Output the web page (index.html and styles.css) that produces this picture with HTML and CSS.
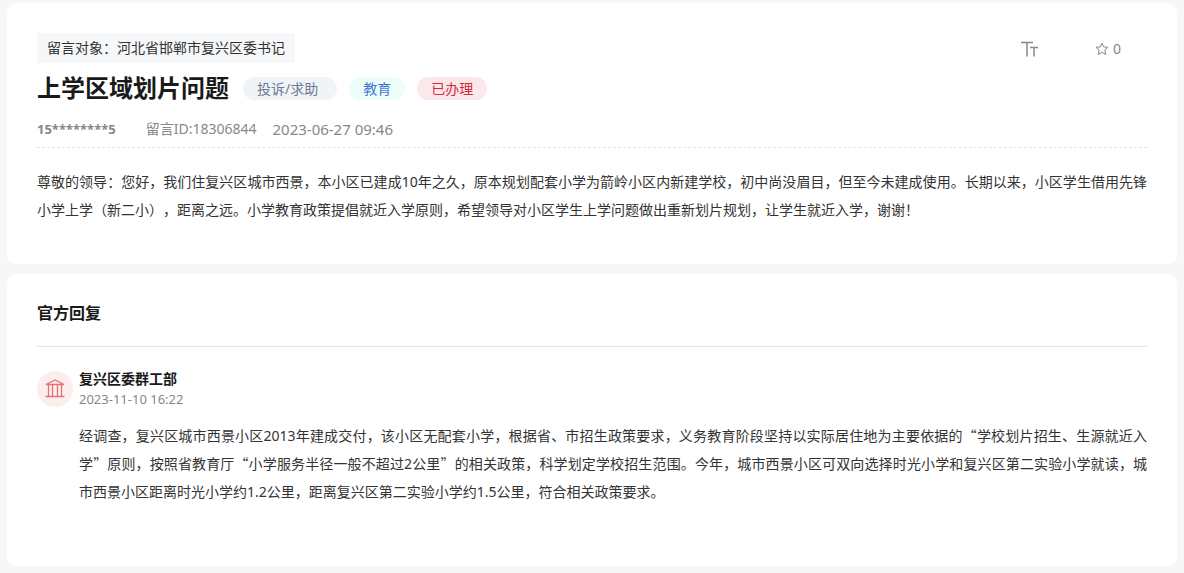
FILE: index.html
```html
<!DOCTYPE html>
<html lang="zh-CN">
<head>
<meta charset="utf-8">
<meta name="viewport" content="width=device-width, initial-scale=1">
<title>上学区域划片问题</title>
<link rel="stylesheet" href="styles.css">
</head>
<body>
<main class="page">
  <article class="card card-message">
    <header class="topbar">
      <p class="target">留言对象：河北省邯郸市复兴区委书记</p>
      <div class="actions">
        <button class="action" type="button" aria-label="字体大小">
          <svg class="icon-text" viewBox="0 0 18 16" aria-hidden="true"><path d="M0 1.500H12M6 1.500V15.500M9 6.500H17M13 6.500V15.500"/></svg>
        </button>
        <button class="action" type="button" aria-label="收藏">
          <svg class="icon-star" viewBox="0 0 14 14" aria-hidden="true"><path d="M7 1.200L8.700 4.900L12.900 5.300L9.800 8.100L10.700 12.500L7 10.400L3.300 12.500L4.200 8.100L1.100 5.300L5.300 4.900Z"/></svg>
          <span>0</span>
        </button>
      </div>
    </header>
    <div class="headline">
      <h1 class="title">上学区域划片问题</h1>
      <ul class="tags">
        <li class="tag tag-type">投诉/求助</li>
        <li class="tag tag-topic">教育</li>
        <li class="tag tag-status">已办理</li>
      </ul>
    </div>
    <div class="meta">
      <strong class="user">15********5</strong>
      <span class="message-id">留言ID:18306844</span>
      <time class="posted" datetime="2023-06-27T09:46">2023-06-27 09:46</time>
    </div>
    <p class="body-text">尊敬的领导：您好，我们住复兴区城市西景，本小区已建成10年之久，原本规划配套小学为箭岭小区内新建学校，初中尚没眉目，但至今未建成使用。长期以来，小区学生借用先锋小学上学（新二小），距离之远。小学教育政策提倡就近入学原则，希望领导对小区学生上学问题做出重新划片规划，让学生就近入学，谢谢！</p>
  </article>

  <section class="card card-reply">
    <h2 class="section-title">官方回复</h2>
    <article class="reply">
      <div class="avatar">
        <svg class="icon-hall" viewBox="0 0 20 20" aria-hidden="true"><path d="M1 5.500L10 1L19 5.500ZM3.500 5.500V17.500M7.500 5.500V17.500M12.500 5.500V17.500M16.500 5.500V17.500M.5 17.500H19.500"/></svg>
      </div>
      <div class="reply-main">
        <h3 class="reply-author">复兴区委群工部</h3>
        <time class="reply-time" datetime="2023-11-10T16:22">2023-11-10 16:22</time>
        <p class="body-text">经调查，复兴区城市西景小区2013年建成交付，该小区无配套小学，根据省、市招生政策要求，义务教育阶段坚持以实际居住地为主要依据的<span class="quote">“</span>学校划片招生、生源就近入学<span class="quote">”</span>原则，按照省教育厅<span class="quote">“</span>小学服务半径一般不超过2公里<span class="quote">”</span>的相关政策，科学划定学校招生范围。今年，城市西景小区可双向选择时光小学和复兴区第二实验小学就读，城市西景小区距离时光小学约1.2公里，距离复兴区第二实验小学约1.5公里，符合相关政策要求。</p>
      </div>
    </article>
  </section>
</main>
</body>
</html>
```
FILE: styles.css
```css
* {
  box-sizing: border-box;
}

body {
  margin: 0;
  background: #f6f7f9;
  color: #333;
  font: 14px/20px "Noto Sans", "Noto Sans CJK SC", sans-serif;
  text-spacing-trim: space-all;
  text-autospace: no-autospace;
}

h1, h2, h3, p, ul {
  margin: 0;
  padding: 0;
}

.page {
  display: flex;
  flex-direction: column;
  gap: 10px;
  padding: 3px 7px 7px;
}

.card {
  padding: 30px;
  border-radius: 10px;
  background: #fff;
}

.card-message {
  padding-bottom: 40px;
}

.card-reply {
  padding-top: 24px;
  padding-bottom: 60px;
}

.topbar {
  display: flex;
  align-items: center;
  justify-content: space-between;
}

.target {
  padding: 5px 10px;
  border-radius: 2px;
  background: #f6f7f9;
}

.actions {
  display: flex;
  gap: 56px;
  padding: 2px 26px 0 0;
}

.action {
  display: flex;
  align-items: center;
  gap: 4px;
  padding: 0;
  border: 0;
  background: none;
  color: #888;
  font: inherit;
  cursor: pointer;
}

.icon-text,
.icon-star,
.icon-hall {
  fill: none;
  stroke: currentColor;
}

.icon-text {
  width: 18px;
  height: 16px;
  stroke-width: 1.5;
}

.icon-star {
  width: 14px;
  height: 14px;
}

.headline {
  display: flex;
  align-items: center;
  gap: 14px;
  padding: 8px 0 14px;
}

.title {
  color: #1a1a1a;
  font-size: 24px;
  line-height: 34px;
}

.tags {
  display: flex;
  gap: 12px;
  list-style: none;
}

.tag {
  padding: 0 14px;
  border-radius: 12px;
  line-height: 23px;
}

.tag-type {
  padding-right: 19px;
  background: #f0f4f9;
  color: #6c7b8f;
}

.tag-topic {
  background: #effdfa;
  color: #3f77cf;
}

.tag-status {
  background: #fae9ea;
  color: #d7263d;
}

.meta {
  display: flex;
  gap: 16px;
  padding-bottom: 8px;
  border-bottom: 1px dashed #e5e5e5;
  color: #888;
}

.user {
  margin-right: 14px;
  font-size: 13px;
}

.posted {
  font-size: 15px;
}

.body-text {
  margin-top: 20px;
  line-height: 28px;
  text-align: justify;
}

.quote {
  font-family: "Noto Sans CJK SC", sans-serif;
  line-height: 1;
}

.section-title {
  padding-bottom: 18px;
  border-bottom: 1px solid #e5e5e5;
  color: #1a1a1a;
  font-size: 16px;
  line-height: 30px;
}

.reply {
  display: flex;
  gap: 6px;
  padding-top: 22px;
}

.avatar {
  display: grid;
  flex: none;
  place-items: center;
  width: 36px;
  height: 36px;
  margin-top: 2px;
  border-radius: 50%;
  background: #fdeeee;
  color: #e37373;
}

.icon-hall {
  width: 20px;
  height: 20px;
  stroke-width: 1.3;
}

.reply-main {
  flex: 1;
}

.reply-author {
  color: #1a1a1a;
  font-size: 14px;
}

.reply-time {
  display: block;
  color: #888;
  font-size: 13px;
}

.reply-main .body-text {
  margin-top: 13px;
}
```
